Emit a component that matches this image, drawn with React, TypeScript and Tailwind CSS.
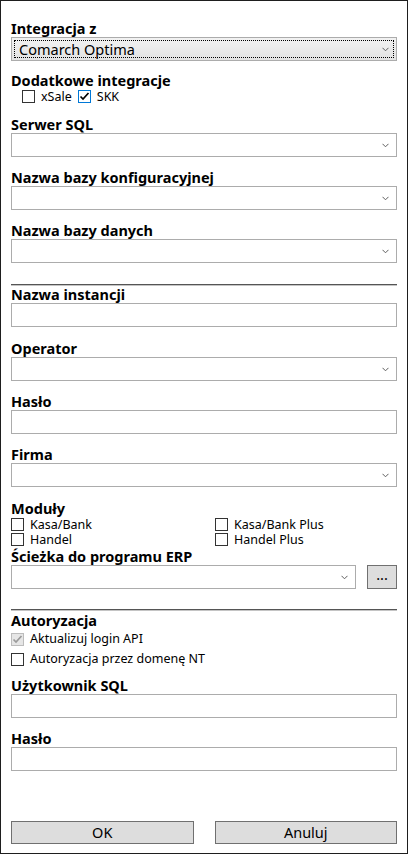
import React from "react";

const font = { fontFamily: '"Noto Sans", "Open Sans", sans-serif' };

function Label({ text, className = "" }: { text: string; className?: string }) {
  return (
    <div className={"h-[18px] text-[14.5px] font-bold leading-[18px] text-black " + className}>
      {text}
    </div>
  );
}

function Chevron() {
  return (
    <svg width="7" height="5" viewBox="0 0 7 5" className="shrink-0">
      <polyline points="0.5,0.8 3.5,3.8 6.5,0.8" fill="none" stroke="#5f5f5f" strokeWidth="1" />
    </svg>
  );
}

function Combo({ className = "" }: { className?: string }) {
  return (
    <div className={"flex h-[24px] items-center justify-end border border-[#acacac] bg-white pr-[7px] " + className}>
      <Chevron />
    </div>
  );
}

function TextBox() {
  return <div className="h-[24px] border border-[#acacac] bg-white" />;
}

function Check({
  checked = false,
  focused = false,
  disabled = false,
}: {
  checked?: boolean;
  focused?: boolean;
  disabled?: boolean;
}) {
  const box = disabled
    ? "border-[#bcbcbc] bg-[#e6e6e6]"
    : focused
    ? "border-[#0078d7] bg-white"
    : "border-[#333333] bg-white";
  return (
    <div className={"flex h-[13px] w-[13px] shrink-0 items-center justify-center border " + box}>
      {checked && (
        <svg width="11" height="11" viewBox="0 0 11 11">
          <polyline
            points="1.5,5.5 4,8 9.5,2"
            fill="none"
            stroke={disabled ? "#9a9a9a" : "#000000"}
            strokeWidth="1.7"
          />
        </svg>
      )}
    </div>
  );
}

function CheckItem({
  label,
  checked,
  focused,
  disabled,
}: {
  label: string;
  checked?: boolean;
  focused?: boolean;
  disabled?: boolean;
}) {
  return (
    <div className="flex items-center gap-[6px]">
      <Check checked={checked} focused={focused} disabled={disabled} />
      <span className="text-[12.5px] leading-[14px] text-black">{label}</span>
    </div>
  );
}

function Separator({ className = "" }: { className?: string }) {
  return (
    <div className={className}>
      <div className="h-px bg-[#555555]" />
      <div className="h-px bg-[#c4c4c4]" />
    </div>
  );
}

function WinButton({ text, className = "" }: { text: string; className?: string }) {
  return (
    <div
      className={
        "flex h-[23px] items-center justify-center border border-[#707070] bg-[#dddddd] text-[14.5px] text-black " +
        className
      }
    >
      {text}
    </div>
  );
}

export default function App() {
  return (
    <div style={font} className="h-[854px] w-[408px] overflow-hidden bg-[#1e1e1e] p-px">
      <div className="flex h-[852px] flex-col bg-white px-[10px] pt-[18px]">
        <Label text="Integracja z" />
        <div className="h-[24px] border border-[#acacac] bg-gradient-to-b from-[#f2f2f2] to-[#e3e3e3] p-[2px]">
          <div className="flex h-full items-center justify-between border border-dotted border-black pl-[4px] pr-[4px]">
            <span className="text-[14.5px] leading-[18px] text-black">Comarch Optima</span>
            <Chevron />
          </div>
        </div>

        <Label text="Dodatkowe integracje" className="mt-[10px]" />
        <div className="flex h-[15px] items-center gap-[6px] pl-[11px]">
          <CheckItem label="xSale" />
          <CheckItem label="SKK" checked focused />
        </div>

        <Label text="Serwer SQL" className="mt-[11px]" />
        <Combo />
        <Label text="Nazwa bazy konfiguracyjnej" className="mt-[11px]" />
        <Combo />
        <Label text="Nazwa bazy danych" className="mt-[11px]" />
        <Combo />

        <Separator className="mt-[21px]" />

        <Label text="Nazwa instancji" className="mt-[-1px]" />
        <TextBox />
        <Label text="Operator" className="mt-[12px]" />
        <Combo />
        <Label text="Hasło" className="mt-[11px]" />
        <TextBox />
        <Label text="Firma" className="mt-[11px]" />
        <Combo />

        <Label text="Moduły" className="mt-[12px]" />
        <div className="grid grid-cols-2">
          <div className="flex h-[15px] items-center">
            <CheckItem label="Kasa/Bank" />
          </div>
          <div className="flex h-[15px] items-center pl-[11px]">
            <CheckItem label="Kasa/Bank Plus" />
          </div>
          <div className="flex h-[15px] items-center">
            <CheckItem label="Handel" />
          </div>
          <div className="flex h-[15px] items-center pl-[11px]">
            <CheckItem label="Handel Plus" />
          </div>
        </div>

        <Label text="Ścieżka do programu ERP" />
        <div className="flex gap-[11px]">
          <Combo className="flex-1" />
          <WinButton text="..." className="h-[24px] w-[30px] pb-[4px]" />
        </div>

        <Separator className="mt-[20px]" />

        <Label text="Autoryzacja" />
        <div className="flex h-[20px] items-center">
          <CheckItem label="Aktualizuj login API" checked disabled />
        </div>
        <div className="flex h-[20px] items-center">
          <CheckItem label="Autoryzacja przez domenę NT" />
        </div>

        <Label text="Użytkownik SQL" className="mt-[7px]" />
        <TextBox />
        <Label text="Hasło" className="mt-[11px]" />
        <TextBox />

        <div className="mt-[50px] flex gap-[21px]">
          <WinButton text="OK" className="flex-1" />
          <WinButton text="Anuluj" className="flex-1" />
        </div>
      </div>
    </div>
  );
}
